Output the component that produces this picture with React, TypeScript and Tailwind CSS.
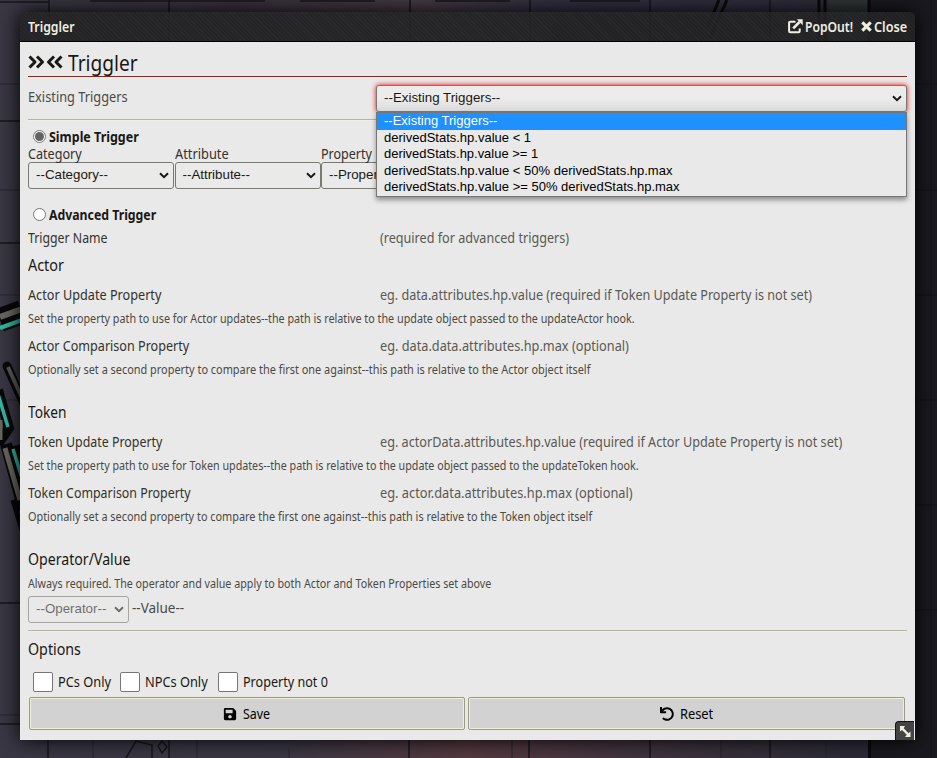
import { useLayoutEffect, useRef, useState, type ReactNode } from 'react'
import { FaSave, FaUndo } from 'react-icons/fa'

/** Text condensed so that it fills a fixed column width. */
function Fit({ w, className = '', children }: { w: number; className?: string; children: string }) {
  const ref = useRef<HTMLSpanElement>(null)
  const [scale, setScale] = useState(1)
  useLayoutEffect(() => {
    setScale(w / ref.current!.offsetWidth)
  }, [w])
  return (
    <span className={`inline-flex ${className}`} style={{ width: w }}>
      <span ref={ref} className="shrink-0 origin-left whitespace-pre" style={{ transform: `scaleX(${scale})` }}>
        {children}
      </span>
    </span>
  )
}

function Chevron({ className = '' }: { className?: string }) {
  return (
    <svg className={className} width="10" height="7" viewBox="0 0 10 7" fill="none" stroke="currentColor" strokeWidth="2">
      <path d="M1 1.2 L5 5.2 L9 1.2" />
    </svg>
  )
}

function DoubleChevron({ className = '' }: { className?: string }) {
  return (
    <svg className={className} width="17" height="14" viewBox="0 0 17 14" fill="none" stroke="currentColor" strokeWidth="3" strokeLinejoin="round">
      <path d="M1.500 1.500L7 7L1.500 12.500M9 1.500L14.500 7L9 12.500" />
    </svg>
  )
}

function PopOutIcon({ className = '' }: { className?: string }) {
  return (
    <svg className={className} width="15" height="15" viewBox="0 0 15 15" fill="none" stroke="currentColor">
      <path d="M7.500 2.700H2.200Q1.100 2.700 1.100 3.800V12.200Q1.100 13.300 2.200 13.300H10.600Q11.700 13.300 11.700 12.200V9.500" strokeWidth="2" />
      <path d="M5.200 9.300L11.500 3" strokeWidth="2.600" />
      <path d="M8.800 0.300H14.700V6.200Z" fill="currentColor" stroke="none" />
    </svg>
  )
}

function CloseIcon({ className = '' }: { className?: string }) {
  return (
    <svg className={className} width="11" height="11" viewBox="0 0 11 11" fill="none" stroke="currentColor" strokeWidth="3.200">
      <path d="M1.300 1.300L9.700 9.700M9.700 1.300L1.300 9.700" />
    </svg>
  )
}

function Select({ label, className }: { label: string; className: string }) {
  return (
    <div className={`flex h-[27px] shrink-0 items-center justify-between overflow-hidden rounded-[3px] border border-[#7a7971] bg-[#eaeaea] pl-[7px] pr-1 font-['Liberation_Sans',Arial,sans-serif] text-[13.333px] text-[#191813] ${className}`}>
      <span className="whitespace-nowrap pb-px">{label}</span>
      <Chevron className="shrink-0" />
    </div>
  )
}

function Rule({ className }: { className: string }) {
  return <div className={`h-[2px] border-t border-[#b5b3a4] bg-[#efeee2] ${className}`} />
}

function Radio({ checked }: { checked?: boolean }) {
  return (
    <span className="ml-[5px] mr-[2.5px] flex size-[13px] items-center justify-center rounded-full border border-[#767676] bg-white">
      {checked && <span className="size-[9px] rounded-full bg-[#636363]" />}
    </span>
  )
}

function Heading({ w, className, children }: { w: number; className: string; children: string }) {
  return (
    <h3 className={`flex h-[22px] items-center text-[16px] ${className}`}>
      <Fit w={w}>{children}</Fit>
    </h3>
  )
}

function Field({ label, w, hint, hw, className }: { label: string; w: number; hint: string; hw: number; className: string }) {
  return (
    <div className={`flex h-[29px] items-center pb-px ${className}`}>
      <div className="flex w-[352px]">
        <Fit w={w} className="text-[#33322c]">{label}</Fit>
      </div>
      <Fit w={hw} className="text-[#5a5953]">{hint}</Fit>
    </div>
  )
}

function Note({ w, className = '', children }: { w: number; className?: string; children: string }) {
  return (
    <p className={`flex h-[18px] items-center text-[12px] text-[#4b4a44] ${className}`}>
      <Fit w={w}>{children}</Fit>
    </p>
  )
}

function Check({ label, w, className }: { label: string; w: number; className: string }) {
  return (
    <label className={`flex items-center gap-[5px] ${className}`}>
      <span className="size-5 rounded-[2px] border border-[#767676] bg-white" />
      <Fit w={w} className="pb-px">{label}</Fit>
    </label>
  )
}

function Button({ className, children }: { className: string; children: ReactNode }) {
  return (
    <button className={`flex h-[33px] items-center justify-center rounded-[2px] border border-[#9c9c86] bg-[#d2d2d2] text-black shadow-[inset_0_0_0_1px_#efefd8] ${className}`}>
      {children}
    </button>
  )
}

function Scene() {
  return (
    <svg className="absolute inset-0" width="937" height="758" viewBox="0 0 937 758">
      <defs>
        <linearGradient id="floor" x1="0" x2="1" y1="0" y2="0">
          <stop offset="0" stopColor="#393743" />
          <stop offset="0.3" stopColor="#3b3844" />
          <stop offset="0.5" stopColor="#54393f" />
          <stop offset="0.68" stopColor="#40343f" />
          <stop offset="0.9" stopColor="#2d2c37" />
        </linearGradient>
        <linearGradient id="ceiling" x1="0" x2="1" y1="0" y2="0">
          <stop offset="0" stopColor="#393743" />
          <stop offset="0.25" stopColor="#38313c" />
          <stop offset="0.45" stopColor="#443a43" />
          <stop offset="0.6" stopColor="#302f3f" />
          <stop offset="1" stopColor="#2d2c37" />
        </linearGradient>
      </defs>
      <rect width="937" height="758" fill="url(#floor)" />
      <rect width="937" height="100" fill="url(#ceiling)" />
      <rect x="870" width="67" height="758" fill="#1a191f" />
      <g stroke="#17161b" strokeWidth="1.5">
        <path d="M0 2H48M90 1H265M300 1H375M435 1H510M570 1H640M0 121H20M0 243H20M0 603H20M0 724H20" />
        <path d="M49 0V42M169 0V42M410 0V42M530 0V42M650 0V42M770 0V42M48 740V758M169 740V758M409 740V758M529 740V758M650 740V758M770 740V758" />
      </g>
      <path d="M0 190H20M0 84H20M0 295H20M0 400H20M0 715H20M93 740V758M197 740V758M289 748V758M512 740V758M721 740V758M826 740V758" stroke="#28262e" />
      <path d="M915 84H937M915 190H937M915 295H937M915 400H937M915 505H937M915 610H937M931 0V758" stroke="#131217" />
      <rect x="829" width="38" height="42" fill="#303536" />
      <path d="M819 0V42M825 0V42M869 0V42M869.500 740V758" stroke="#09090b" strokeWidth="3" />
      <path d="M727 0L710 38M719 0L708 26" stroke="#0b0b0d" strokeWidth="3" />
      <path d="M0 320L22 312" stroke="#08080a" strokeWidth="24" />
      <path d="M0 317L22 309" stroke="#68665f" strokeWidth="6" />
      <path d="M0 328L22 320" stroke="#30b8a2" strokeWidth="4" />
      <path d="M7 366L24 404" stroke="#08080a" strokeWidth="9" strokeLinecap="round" />
      <path d="M8 367L23 400" stroke="#5a5955" strokeWidth="4" />
      <path d="M-2 390L9 428L-2 444" stroke="#08080a" strokeWidth="10" fill="none" />
      <path d="M-2 394L8 427" stroke="#30b8a2" strokeWidth="3.500" />
      <path d="M0 420V440" stroke="#68665f" strokeWidth="5" />
      <path d="M6 444L24 510M14 446L24 478" stroke="#08080a" strokeWidth="12" />
      <path d="M5 448L20 500" stroke="#68665f" strokeWidth="5" />
      <path d="M13 449L22 478" stroke="#30b8a2" strokeWidth="3.500" />
      <path d="M13 500L22 530" stroke="#08080a" strokeWidth="5" />
      <path d="M126 758L136 741L152 745V758M158 746L162 741L167 747L162 753Z" stroke="#17161b" strokeWidth="1.500" fill="none" />
    </svg>
  )
}

const triggers = [
  'derivedStats.hp.value < 1',
  'derivedStats.hp.value >= 1',
  'derivedStats.hp.value < 50% derivedStats.hp.max',
  'derivedStats.hp.value >= 50% derivedStats.hp.max',
]

export default function App() {
  return (
    <div className="relative h-[758px] w-[937px] overflow-hidden bg-[#393743] pl-5 pt-3 font-['Noto_Sans','Open_Sans',sans-serif] text-[14px] leading-none text-[#191813]">
      <Scene />
      <div className="relative flex h-[728px] w-[895px] flex-col rounded-t-[5px] shadow-[0_0_20px_#000]">
        <header className="flex h-[30px] shrink-0 items-center rounded-t-[5px] border-b border-black bg-[#222223]/90 bg-[repeating-linear-gradient(45deg,#ffffff06_0_1px,transparent_1px_3px)] px-[7.5px] font-semibold text-[#efeee0]">
          <div className="flex flex-1"><Fit w={46.5}>Triggler</Fit></div>
          <PopOutIcon className="mr-[2.5px]" />
          <Fit w={48.5}>PopOut!</Fit>
          <CloseIcon className="ml-[7px] mr-[2px]" />
          <Fit w={33.5} className="mr-[0.5px]">Close</Fit>
        </header>

        <main className="flex-1 bg-[#e9e9e9] px-2">
          <h1 className="flex h-[35px] items-center border-b border-[#782e22] pt-[6px] text-[22px]">
            <DoubleChevron className="mr-px" />
            <DoubleChevron className="mr-[5px] rotate-180" />
            <Fit w={69.5}>Triggler</Fit>
          </h1>

          <div className="mt-2 flex h-[27px] items-center">
            <div className="flex w-[348px] pb-[3px]"><Fit w={99.5} className="text-[#4b4a44]">Existing Triggers</Fit></div>
            <div className="relative">
              <Select label="--Existing Triggers--" className="w-[531px] bg-linear-to-b from-[#ececec] from-50% to-[#dadada] shadow-[0_0_5px_#f00]" />
              <ul className="absolute left-0 top-[27px] z-10 h-[85px] w-[531px] border border-[#767676] bg-[#e9e9e9] font-['Liberation_Sans',Arial,sans-serif] text-[13px] text-black shadow-[0_3px_5px_#0006]">
                <li className="flex h-[17px] items-center bg-[#1e90ff] pb-[2px] pl-[7px] text-white">--Existing Triggers--</li>
                {triggers.map((t) => (
                  <li key={t} className="flex h-[16.500px] items-center pb-[2px] pl-[7px]"><Fit w={t.length > 40 ? (t.includes('>=') ? 296 : 288.5) : t.includes('>=') ? 154.5 : 147}>{t}</Fit></li>
                ))}
              </ul>
            </div>
          </div>

          <Rule className="mt-[7px]" />

          <div className="mt-[7px] flex h-[17px] items-center font-bold">
            <Radio checked />
            <Fit w={90}>Simple Trigger</Fit>
          </div>
          <div className="flex h-[44px]">
            <div className="w-[146.500px]">
              <div className="flex h-[17px] items-center text-[#33322c]"><Fit w={54}>Category</Fit></div>
              <Select label="--Category--" className="w-[146px]" />
            </div>
            <div className="w-[146.500px]">
              <div className="flex h-[17px] items-center text-[#33322c]"><Fit w={54}>Attribute</Fit></div>
              <Select label="--Attribute--" className="w-[146px]" />
            </div>
            <div className="w-[146.500px]">
              <div className="flex h-[17px] items-center text-[#33322c]"><Fit w={51}>Property</Fit></div>
              <Select label="--Property--" className="w-[146px]" />
            </div>
          </div>

          <div className="mt-[17px] flex h-[17px] items-center font-bold">
            <Radio />
            <Fit w={107}>Advanced Trigger</Fit>
          </div>
          <Field className="mt-px" label="Trigger Name" w={80} hint="(required for advanced triggers)" hw={189} />

          <Heading w={36} className="mt-px">Actor</Heading>
          <Field className="mt-[5px]" label="Actor Update Property" w={133} hint="eg. data.attributes.hp.value (required if Token Update Property is not set)" hw={432} />
          <Note w={607}>Set the property path to use for Actor updates--the path is relative to the update object passed to the updateActor hook.</Note>
          <Field className="mt-[4px]" label="Actor Comparison Property" w={161} hint="eg. data.data.attributes.hp.max (optional)" hw={249} />
          <Note w={562}>Optionally set a second property to compare the first one against--this path is relative to the Actor object itself</Note>

          <Heading w={38.5} className="mt-[22px]">Token</Heading>
          <Field className="mt-[5px]" label="Token Update Property" w={134.5} hint="eg. actorData.attributes.hp.value (required if Actor Update Property is not set)" hw={462} />
          <Note w={610.5}>Set the property path to use for Token updates--the path is relative to the update object passed to the updateToken hook.</Note>
          <Field className="mt-[4px]" label="Token Comparison Property" w={163} hint="eg. actor.data.attributes.hp.max (optional)" hw={252.5} />
          <Note w={564}>Optionally set a second property to compare the first one against--this path is relative to the Token object itself</Note>

          <Heading w={102.5} className="mt-[22px]">Operator/Value</Heading>
          <Note w={463.5} className="mt-[5px]">Always required. The operator and value apply to both Actor and Token Properties set above</Note>
          <div className="mt-[3px] flex h-[27px] items-center gap-[3px]">
            <Select label="--Operator--" className="w-[101px] opacity-60" />
            <Fit w={52} className="pb-[3px] text-[#4b4a44]">--Value--</Fit>
          </div>
          <Rule className="mt-[7px]" />

          <Heading w={52.5} className="mt-[6px]">Options</Heading>
          <div className="mt-[12px] flex h-5">
            <Check className="ml-[5px] w-[87px]" label="PCs Only" w={53} />
            <Check className="w-[98px]" label="NPCs Only" w={63} />
            <Check className="" label="Property not 0" w={84.5} />
          </div>
          <div className="mt-[5px] flex gap-[3px] pl-px">
            <Button className="w-[436px]">
              <FaSave className="mr-[6px] size-[14px]" />
              <Fit w={27.5}>Save</Fit>
            </Button>
            <Button className="w-[437px]">
              <FaUndo className="mr-[6px] size-[14px]" />
              <Fit w={33}>Reset</Fit>
            </Button>
          </div>
        </main>

        <div className="absolute bottom-0 right-px flex size-[19px] items-center justify-center rounded-tl-[4px] border-l border-t border-[#111] bg-[#444]">
          <svg width="13" height="13" viewBox="0 0 13 13" fill="#f0f0e0">
            <path d="M1 1H6L4.700 3.200L9.500 8.200L11.500 6.500V12H6L7.800 9.800L3 5L1 6.500Z" />
          </svg>
        </div>
      </div>
    </div>
  )
}
